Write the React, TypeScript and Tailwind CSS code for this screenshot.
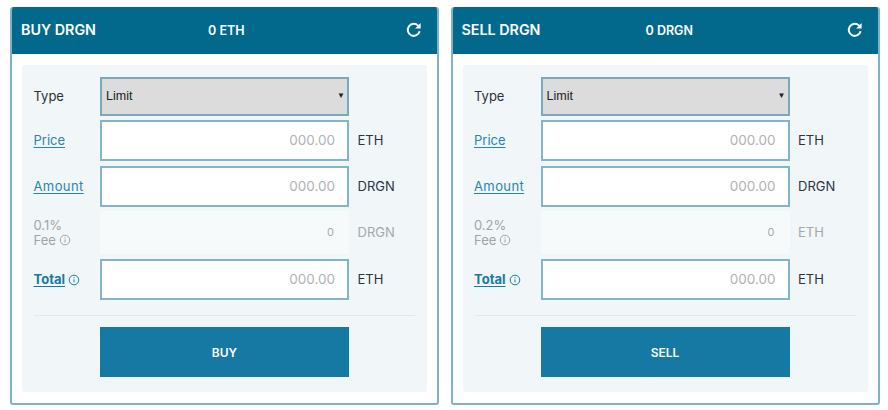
const font = { fontFamily: '"Inter", "Liberation Sans", sans-serif' };

function Info({ className }: { className: string }) {
  return (
    <svg viewBox="0 0 12 12" className={className} fill="none" stroke="currentColor" strokeWidth="1">
      <circle cx="6" cy="6" r="4.8" />
      <path d="M6 5.4v3M6 3.2v1.1" />
    </svg>
  );
}

function Refresh() {
  return (
    <svg viewBox="0 0 16 16" className="h-[16px] w-[16px]" fill="none" stroke="#fff" strokeWidth="2">
      <path d="M13.6 9.2A6 6 0 1 1 12 3.6L13.6 5.4" />
      <path d="M14.6 1v5.4H9.2z" fill="#fff" stroke="none" />
    </svg>
  );
}

function Row({ label, unit, muted, children, className }: { label: React.ReactNode; unit?: string; muted?: boolean; children: React.ReactNode; className: string }) {
  return (
    <div className={`flex items-center ${className}`}>
      <div className="-ml-[0.5px] w-[66.5px] shrink-0 text-[13px] leading-[15px]">{label}</div>
      <div className="h-full w-[249px] shrink-0">{children}</div>
      {unit && <div className={`ml-[8.5px] text-[13px] ${muted ? "pt-[1px] text-[#a3a8ab]" : "text-[#2a3540]"}`}>{unit}</div>}
    </div>
  );
}

function Field() {
  return (
    <div className="flex h-full items-center justify-end border-2 border-[#83b5c9] bg-white pr-[12px] text-[13.5px] text-[#b0b2b4]">000.00</div>
  );
}

function Panel({ title, balance, action, feePct, feeUnit, balanceClass }: { title: string; balance: string; action: string; feePct: string; feeUnit: string; balanceClass: string }) {
  const link = "text-[#2a86ad] underline underline-offset-2";
  return (
    <section className="flex h-[398px] w-[429px] flex-col overflow-hidden rounded-[3px] border-2 border-t-0 border-[#7fb2c7] bg-white">
      <header className="relative -mx-[2px] flex h-[47px] shrink-0 items-center justify-between rounded-t-[3px] bg-[#02698c] pb-[2px] pl-[11px] pr-[17px] text-white">
        <span className="text-[14.3px] font-semibold">{title}</span>
        <span className={`absolute top-[15px] text-[12.5px] font-semibold ${balanceClass}`}>{balance}</span>
        <Refresh />
      </header>
      <div className="mx-[10px] mt-[11px] flex h-[327px] flex-col rounded-[3px] bg-[#f1f6f9] px-[12px] pt-[12px]">
        <Row label={<span className="text-[#2c3238]">Type</span>} className="h-[39px]">
          <div className="relative flex h-full items-center border-2 border-[#7ba9bb] bg-[#dcdcdc] pl-[4px] text-[12.5px] text-[#222]" style={{ fontFamily: '"Liberation Sans", sans-serif' }}>
            Limit
            <span className="absolute right-[2px] top-[11px] text-[8px]">▼</span>
          </div>
        </Row>
        <Row label={<a className={link}>Price</a>} unit="ETH" className="mt-[4px] h-[41px]"><Field /></Row>
        <Row label={<a className={`${link} tracking-[0.4px]`}>Amount</a>} unit="DRGN" className="mt-[5px] h-[41px]"><Field /></Row>
        <Row
          label={
            <div className="text-[#a0a5a8]">
              <div>{feePct}</div>
              <div className="flex items-center gap-[3px]">Fee <Info className="h-[12px] w-[12px]" /></div>
            </div>
          }
          unit={feeUnit}
          muted
          className="mt-[4px] h-[43px]"
        >
          <div className="flex h-full items-center justify-end bg-[#f7fafb] pr-[15px] text-[11px] text-[#a9acae]">0</div>
        </Row>
        <Row
          label={
            <span className="flex items-center gap-[3px] text-[#1a7aa2]">
              <a className="font-bold underline underline-offset-2">Total</a>
              <Info className="h-[12px] w-[12px]" />
            </span>
          }
          unit="ETH"
          className="mt-[5px] h-[41px]"
        >
          <Field />
        </Row>
        <div className="mt-[15px] h-px bg-[#e2e8ec]" />
        <div className="ml-[66px] mt-[11px] flex h-[50px] w-[249px] items-center justify-center bg-[#1679a3] pt-[1px] text-[12px] font-semibold text-white">{action}</div>
      </div>
    </section>
  );
}

export default function App() {
  return (
    <div className="flex h-[410px] w-[888px] gap-[11.5px] bg-white pl-[10px] pt-[7px]" style={font}>
      <Panel title="BUY DRGN" balance="0 ETH" action="BUY" feePct="0.1%" feeUnit="DRGN" balanceClass="left-[198px]" />
      <Panel title="SELL DRGN" balance="0 DRGN" action="SELL" feePct="0.2%" feeUnit="ETH" balanceClass="left-[195px]" />
    </div>
  );
}
